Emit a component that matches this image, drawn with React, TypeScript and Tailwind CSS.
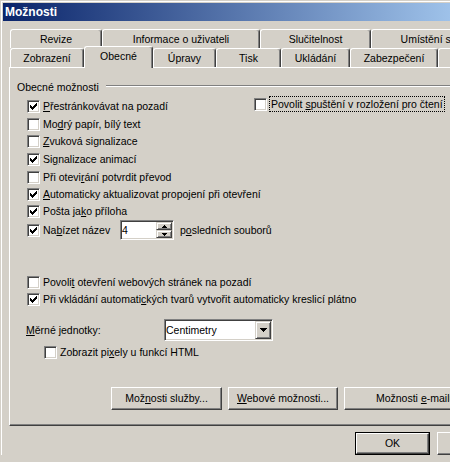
import React from "react";

const raisedBtn =
  "border border-t-white border-l-white border-r-[#404040] border-b-[#404040] shadow-[inset_-1px_-1px_0_#808080]";
const sunken =
  "border border-t-[#808080] border-l-[#808080] border-r-white border-b-white shadow-[inset_1px_1px_0_#404040,inset_-1px_-1px_0_#d4d0c8]";
const comboBtn =
  "border border-t-[#d4d0c8] border-l-[#d4d0c8] border-r-[#404040] border-b-[#404040] shadow-[inset_1px_1px_0_#ffffff,inset_-1px_-1px_0_#808080]";

function U({ children }: { children: React.ReactNode }) {
  return <span className="underline underline-offset-[1px] decoration-1">{children}</span>;
}

function Check({ checked }: { checked?: boolean }) {
  return (
    <span className={`relative block w-[13px] h-[13px] shrink-0 bg-white ${sunken}`}>
      {checked && (
        <svg
          className="absolute left-[2px] top-[2px]"
          width="7"
          height="7"
          viewBox="0 0 7 7"
          shapeRendering="crispEdges"
        >
          <path
            d="M6 0h1v1h-1z M5 1h2v1h-2z M0 2h1v1h-1z M4 2h3v1h-3z M0 3h2v1h-2z M3 3h3v1h-3z M0 4h5v1h-5z M1 5h3v1h-3z M2 6h1v1h-1z"
            fill="#000"
          />
        </svg>
      )}
    </span>
  );
}

function CheckRow({
  h,
  checked,
  children,
  className = "",
}: {
  h: string;
  checked?: boolean;
  children: React.ReactNode;
  className?: string;
}) {
  return (
    <div className={`flex items-center ${h} ${className}`}>
      <Check checked={checked} />
      <span className="ml-[3px] whitespace-nowrap">{children}</span>
    </div>
  );
}

function Tab({
  label,
  w,
  selected,
}: {
  label: string;
  w: string;
  selected?: boolean;
}) {
  return (
    <div
      className={`${w} shrink-0 flex justify-center pt-[3px] whitespace-nowrap border-t border-l border-r border-t-white border-l-white border-r-[#404040] rounded-t-[3px] shadow-[inset_-1px_0_0_#808080] bg-[#d4d0c8] ${
        selected ? "relative z-10 -mt-[2px] h-[22px]" : "h-[19px]"
      }`}
    >
      <span>{label}</span>
    </div>
  );
}

function Button({
  w,
  children,
  isDefault,
}: {
  w: string;
  children: React.ReactNode;
  isDefault?: boolean;
}) {
  if (isDefault) {
    return (
      <div className={`${w} h-[23px] shrink-0 border border-black`}>
        <div className={`h-full flex items-center justify-center ${raisedBtn}`}>
          <span className="whitespace-nowrap">{children}</span>
        </div>
      </div>
    );
  }
  return (
    <div className={`${w} h-[23px] shrink-0 flex items-center justify-center ${raisedBtn}`}>
      <span className="whitespace-nowrap">{children}</span>
    </div>
  );
}

export default function App() {
  return (
    <div className="w-[450px] h-[462px] overflow-hidden bg-[#d4d0c8] font-['Liberation_Sans',Arial,sans-serif] text-[10.5px] leading-[13px] text-black">
      <div className="w-[500px] border-l border-t border-[#d4d0c8]">
        <div className="border-l border-t border-white pl-[1px] pt-[1px]">
          {/* Title bar */}
          <div className="h-[18px] w-[470px] flex items-center pl-[2px] bg-[linear-gradient(to_right,#0a246a,#a6caf0)] text-white font-bold text-[12px]">
            <span>Možnosti</span>
          </div>

          <div className="pl-[6px] pt-[8px]">
            {/* Tab row 1 */}
            <div className="flex pl-[1px] h-[19px]">
              <Tab label="Revize" w="w-[92px]" />
              <Tab label="Informace o uživateli" w="w-[158px]" />
              <Tab label="Slučitelnost" w="w-[111px]" />
              <Tab label="Umístění souborů" w="w-[142px]" />
            </div>
            {/* Tab row 2 */}
            <div className="flex items-start pl-[1px] h-[19px]">
              <Tab label="Zobrazení" w="w-[74px]" />
              <Tab label="Obecné" w="w-[69px]" selected />
              <Tab label="Úpravy" w="w-[63px]" />
              <Tab label="Tisk" w="w-[65px]" />
              <Tab label="Ukládání" w="w-[69px]" />
              <Tab label="Zabezpečení" w="w-[88px]" />
              <Tab label="Pravopis a mluvnice" w="w-[150px]" />
            </div>

            {/* Panel */}
            <div className="h-[359px] w-[490px] border border-t-white border-l-white border-r-[#404040] border-b-[#404040] shadow-[inset_-1px_-1px_0_#808080]">
              {/* group header */}
              <div className="mt-[13px] h-[13px] pl-[7px] flex items-start">
                <span className="whitespace-nowrap">Obecné možnosti</span>
                <div className="flex-1 ml-[7px] mt-[4px] h-[2px] border-t border-b border-t-[#808080] border-b-white" />
              </div>

              <div className="mt-[4px] pl-[17px] flex flex-col">
                <div className="flex items-start h-[17px]">
                  <CheckRow h="h-[17px]" checked className="w-[227px] shrink-0">
                    <U>P</U>řestránkovávat na pozadí
                  </CheckRow>
                  <div className="-mt-[2px] flex items-center h-[16px]">
                    <Check />
                    <span className="ml-[2px] h-[16px] px-[1px] flex items-center border border-dotted border-black">
                      <span className="whitespace-nowrap">
                        Povolit <U>s</U>puštění v rozložení pro čtení
                      </span>
                    </span>
                  </div>
                </div>
                <CheckRow h="h-[18px]">
                  Mo<U>d</U>rý papír, bílý text
                </CheckRow>
                <CheckRow h="h-[17px]">
                  <U>Z</U>vuková signalizace
                </CheckRow>
                <CheckRow h="h-[18px]" checked>
                  Si<U>g</U>nalizace animací
                </CheckRow>
                <CheckRow h="h-[18px]">
                  Při otevi<U>r</U>ání potvrdit převod
                </CheckRow>
                <CheckRow h="h-[17px]" checked>
                  <U>A</U>utomaticky aktualizovat propojení při otevření
                </CheckRow>
                <CheckRow h="h-[17px]" checked>
                  Pošta ja<U>k</U>o příloha
                </CheckRow>
                <div className="flex items-center h-[20px]">
                  <Check checked />
                  <span className="ml-[3px] w-[77px] whitespace-nowrap">
                    Na<U>b</U>ízet název
                  </span>
                  <div className={`relative w-[54px] h-[20px] bg-white flex items-center pl-[1px] ${sunken}`}>
                    <span>4</span>
                    <div className="absolute right-[1px] top-[1px] w-[16px] h-[16px] flex flex-col">
                      <div className={`h-[8px] flex items-center justify-center bg-[#d4d0c8] ${comboBtn}`}>
                        <svg width="5" height="3" viewBox="0 0 5 3" shapeRendering="crispEdges">
                          <path d="M2 0h1v1h-1z M1 1h3v1h-3z M0 2h5v1h-5z" fill="#000" />
                        </svg>
                      </div>
                      <div className={`h-[8px] flex items-center justify-center bg-[#d4d0c8] ${comboBtn}`}>
                        <svg width="5" height="3" viewBox="0 0 5 3" shapeRendering="crispEdges">
                          <path d="M0 0h5v1h-5z M1 1h3v1h-3z M2 2h1v1h-1z" fill="#000" />
                        </svg>
                      </div>
                    </div>
                  </div>
                  <span className="ml-[6px] whitespace-nowrap">
                    p<U>o</U>sledních souborů
                  </span>
                </div>

                <CheckRow h="h-[17px]" className="mt-[34px]">
                  Povoli<U>t</U> otevření webových stránek na pozadí
                </CheckRow>
                <CheckRow h="h-[17px]" checked>
                  Při vkládání automati<U>c</U>kých tvarů vytvořit automaticky kreslicí plátno
                </CheckRow>
              </div>

              {/* Měrné jednotky */}
              <div className="mt-[11px] pl-[16px] h-[22px] flex items-center">
                <span className="w-[138px] whitespace-nowrap">
                  <U>M</U>ěrné jednotky:
                </span>
                <div className={`relative w-[109px] h-[22px] bg-white flex items-center pl-[1px] ${sunken}`}>
                  <span>Centimetry</span>
                  <div className={`absolute right-[1px] top-[1px] w-[16px] h-[18px] bg-[#d4d0c8] flex items-center justify-center ${comboBtn}`}>
                    <svg width="7" height="4" viewBox="0 0 7 4" shapeRendering="crispEdges">
                      <path d="M0 0h7v1h-7z M1 1h5v1h-5z M2 2h3v1h-3z M3 3h1v1h-1z" fill="#000" />
                    </svg>
                  </div>
                </div>
              </div>

              <div className="mt-[3px] pl-[34px]">
                <CheckRow h="h-[17px]">
                  Zobrazit pi<U>x</U>ely u funkcí HTML
                </CheckRow>
              </div>

              {/* buttons */}
              <div className="mt-[26px] pl-[101px] flex gap-[6px]">
                <Button w="w-[111px]">
                  Mož<U>n</U>osti služby...
                </Button>
                <Button w="w-[110px]">
                  <U>W</U>ebové možnosti...
                </Button>
                <Button w="w-[152px]">
                  Možnosti <U>e</U>-mailu...
                </Button>
              </div>
            </div>

            {/* dialog buttons */}
            <div className="mt-[6px] pl-[346px] flex gap-[7px]">
              <Button w="w-[75px]" isDefault>
                OK
              </Button>
              <Button w="w-[75px]">Storno</Button>
            </div>
          </div>
        </div>
      </div>
    </div>
  );
}
